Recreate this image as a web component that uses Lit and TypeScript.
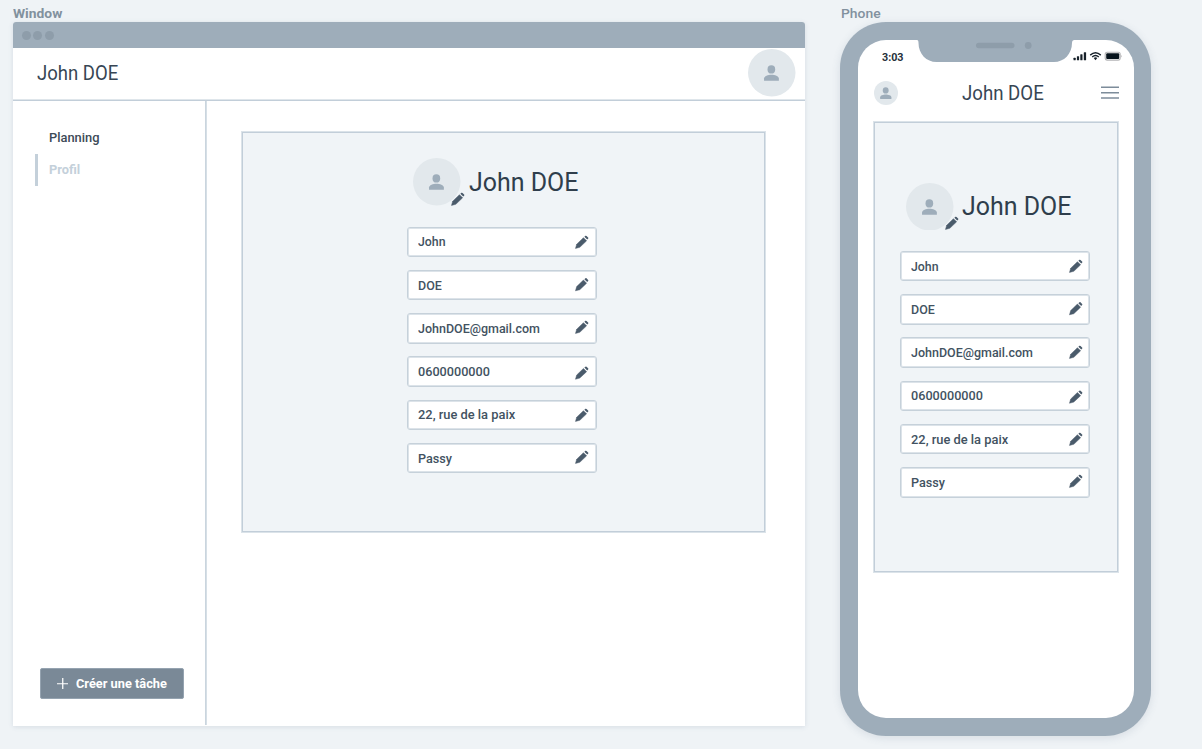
import { LitElement, html, css, svg } from "lit";
import { customElement, property, query } from "lit/decorators.js";
import { styleMap } from "lit/directives/style-map.js";

/** A single line of text condensed or widened to an exact measure. */
@customElement("fit-text")
class FitText extends LitElement {
  @property() text = "";
  @property({ type: Number }) width = 0;
  @query("span") span!: HTMLSpanElement;

  static styles = css`
    :host { display: block; flex: none; white-space: nowrap; }
    span { display: inline-block; transform-origin: 0 50%; }
    .box { display: block; }
  `;

  updated() {
    const natural = this.span.offsetWidth;
    if (natural) this.span.style.transform = `scaleX(${this.width / natural})`;
  }

  render() {
    return html`<div class="box" style=${styleMap({ width: `${this.width}px` })}><span>${this.text}</span></div>`;
  }
}

@customElement("user-avatar")
class UserAvatar extends LitElement {
  static styles = css`
    :host { display: block; flex: none; width: 47.5px; height: 47.5px; }
    :host([small]) { width: 24px; height: 24px; }
    svg { display: block; width: 100%; height: 100%; }
    .disc { fill: #e2e8ec; }
    .person { fill: #9eadba; }
    :host([small]) .person { transform: translate(24px, 24px) scale(1.5) translate(-24px, -24px); }
  `;
  render() {
    return html`<svg viewBox="0 0 48 48">
      <circle class="disc" cx="24" cy="24" r="24" />
      <g class="person">
        <ellipse cx="23.6" cy="20.6" rx="3.9" ry="4.2" />
        <path d="M16.2 32v-2.2c0-2.7 4.2-3.9 7.5-3.9s7.5 1.2 7.5 3.9V32z" />
      </g>
    </svg>`;
  }
}

const pencil = svg`
  <path d="M0.5 14.1 1.8 9.6 9 2.6 12.4 6 5.1 12.9z" stroke="#4a5b6b" stroke-width="0.5" stroke-linejoin="round" />
  <path d="M10 1.7 11.1 0.7Q11.7 0.2 12.3 0.8L14 2.5Q14.5 3.1 14 3.7L13 4.7z" />
`;

interface Field { value: string; width: number; lift: number; }

const fields: Field[] = [
  { value: "John", width: 27.5, lift: 0 },
  { value: "DOE", width: 24, lift: -0.6 },
  { value: "JohnDOE@gmail.com", width: 122, lift: -1 },
  { value: "0600000000", width: 72, lift: 0.8 },
  { value: "22, rue de la paix", width: 97, lift: 0 },
  { value: "Passy", width: 34, lift: -1 },
];

@customElement("profile-card")
class ProfileCard extends LitElement {
  static styles = css`
    :host {
      display: block; box-sizing: border-box;
      border: 1px solid #dbe3e9; box-shadow: inset 0 0 0 1px #c2ced9; background: #f0f4f7;
      color: #2f3e4c; font-family: Roboto, "Liberation Sans", sans-serif;
    }
    .identity { display: flex; align-items: center; padding-left: 6px; height: 48px; }
    .portrait { position: relative; }
    .portrait .edit { position: absolute; left: 38.4px; top: 33.8px; }
    .name { margin-left: 8px; font-size: 25.5px; line-height: 32px; }
    .edit { display: block; width: 13.6px; height: 14px; fill: #4a5b6b; overflow: visible; }
    .fields { display: grid; row-gap: 12.75px; margin-top: 20.5px; }
    .field {
      box-sizing: border-box; height: 30.5px; width: 190.3px;
      display: flex; align-items: center; justify-content: space-between;
      padding: 0 7.4px 0 9.5px; border: 1px solid #c6d1da; box-shadow: inset 0 0 0 1px #dce3e9;
      border-radius: 3px; background: #fff;
      font-size: 13px; line-height: 16px; font-weight: 500; color: #425261;
    }
    .value { margin-top: 1px; }
  `;
  render() {
    return html`
      <div class="identity">
        <div class="portrait">
          <user-avatar></user-avatar>
          <svg class="edit" viewBox="0 0 14.5 14.5">${pencil}</svg>
        </div>
        <fit-text class="name" text="John DOE" .width=${109.5}></fit-text>
      </div>
      <div class="fields">
        ${fields.map((f) => html`
          <div class="field">
            <fit-text class="value" .text=${f.value} .width=${f.width}></fit-text>
            <svg class="edit" viewBox="0 0 14.5 14.5" style=${styleMap({ transform: `translateY(${f.lift}px)` })}>${pencil}</svg>
          </div>`)}
      </div>`;
  }
}

@customElement("desktop-window")
class DesktopWindow extends LitElement {
  static styles = css`
    :host {
      display: flex; flex-direction: column; width: 792.5px; height: 704px;
      background: #fff; border-radius: 3px 3px 0 0; overflow: hidden;
      box-shadow: 0 1px 5px rgba(70, 95, 120, 0.14);
    }
    .titlebar { flex: none; height: 26.4px; display: flex; align-items: center; gap: 2.8px; padding-left: 9px; box-sizing: border-box; background: #9eadba; }
    .dot { width: 9px; height: 9px; border-radius: 50%; background: #8e9daa; }
    .header { flex: none; box-sizing: border-box; height: 52.6px; display: flex; align-items: center; justify-content: space-between; padding: 0 9.5px 2.4px 24px; border-bottom: 1px solid #c2ced9; box-shadow: inset 0 -1px #dfe6eb; }
    .title { font-size: 20px; line-height: 24px; color: #374654; margin-top: 1px; }
    .body { flex: 1; display: flex; }
    .side { flex: none; box-sizing: border-box; width: 194px; border-right: 1px solid #d6dfe6; box-shadow: inset -1px 0 #cad5de; margin-bottom: 1px; display: flex; flex-direction: column; justify-content: space-between; padding: 21px 0 26px 22px; }
    .item { display: flex; align-items: center; box-sizing: border-box; height: 32px; padding-left: 11px; border-left: 3px solid transparent; font-size: 13px; font-weight: 500; line-height: 16px; color: #3c4a57; }
    .item.current { border-color: #c4d0da; color: #c4d0da; font-weight: 700; }
    .create { box-sizing: border-box; width: 144px; height: 31px; margin-left: 5px; padding: 0 0 0 16px; display: flex; align-items: center; gap: 8px; border: 1px solid #95a3b0; border-radius: 2px; background: #7a8997; color: #fff; font: 700 13px/16px Roboto, "Liberation Sans", sans-serif; }
    .create fit-text { margin-top: 1px; }
    .plus { width: 11.5px; height: 11.5px; stroke: #fff; stroke-width: 1.3; }
    .main { flex: 1; padding: 30.4px 0 0 34.5px; }
    .card { width: 524.5px; height: 402px; padding: 25.8px 0 0 165px; }
  `;
  render() {
    return html`
      <div class="titlebar"><i class="dot"></i><i class="dot"></i><i class="dot"></i></div>
      <div class="header">
        <fit-text class="title" text="John DOE" .width=${81.5}></fit-text>
        <user-avatar></user-avatar>
      </div>
      <div class="body">
        <nav class="side">
          <div>
            <div class="item"><fit-text text="Planning" .width=${50.5}></fit-text></div>
            <div class="item current"><fit-text text="Profil" .width=${31.5}></fit-text></div>
          </div>
          <button class="create">
            <svg class="plus" viewBox="0 0 12 12"><path d="M6 0v12M0 6h12" /></svg>
            <fit-text text="Créer une tâche" .width=${90.5}></fit-text>
          </button>
        </nav>
        <div class="main"><profile-card class="card"></profile-card></div>
      </div>`;
  }
}

@customElement("phone-frame")
class PhoneFrame extends LitElement {
  static styles = css`
    :host {
      display: block; position: relative; box-sizing: border-box; width: 311px; height: 713.5px;
      padding: 17.5px; border-radius: 46px; background: #9eadba;
      box-shadow: 0 2px 8px rgba(70, 95, 120, 0.14);
    }
    .screen { box-sizing: border-box; height: 678.5px; border-radius: 28px; background: #fff; }
    .notch { position: absolute; left: 77px; top: 16.5px; width: 160px; height: 24px; }
    .status { height: 33px; display: flex; align-items: center; justify-content: space-between; padding: 0 11px 0 24px; }
    .time { font-size: 11.5px; line-height: 14px; font-weight: 700; color: #26313b; margin-top: 1px; }
    .signals { width: 50px; height: 11px; margin-top: 1px; }
    .header { height: 24px; margin-top: 8.5px; padding: 0 14.5px 0 16px; display: flex; align-items: center; }
    .title { font-size: 20px; line-height: 24px; color: #374654; margin: 0 auto 0 64px; }
    .menu { width: 18px; height: 13px; margin-bottom: 1px; stroke: #7d8c9a; stroke-width: 1.5; }
    .card { width: 246px; height: 452px; margin: 16.3px 0 0 15.5px; padding: 60px 0 0 26.2px; }
  `;
  render() {
    return html`
      <div class="screen">
        <div class="status">
          <fit-text class="time" text="3:03" .width=${21.5}></fit-text>
          <svg class="signals" viewBox="0 0 50 11">
            <g fill="#17212a">
              <rect x="0.5" y="6.8" width="2.2" height="2.4" rx=".5" />
              <rect x="3.9" y="5.3" width="2.2" height="3.9" rx=".5" />
              <rect x="7.3" y="3.3" width="2.2" height="5.9" rx=".5" />
              <rect x="10.8" y="1.3" width="2.3" height="7.9" rx=".5" />
              <path d="M20.7 7q1.8-1.4 3.6 0L22.5 9.2z" />
            </g>
            <g fill="none" stroke="#17212a" stroke-width="1.4">
              <path d="M17.2 4.1q5.3-4.6 10.6 0" />
              <path d="M19.2 6q3.3-2.8 6.6 0" />
            </g>
            <rect x="32.2" y="1.3" width="15" height="7.8" rx="2" fill="none" stroke="#b4b4b6" stroke-width="1.1" />
            <rect x="33.2" y="2.3" width="13" height="5.8" rx="1" fill="#07131c" />
            <path d="M48.2 3.8q1.4 1.4 0 2.8z" fill="#aaa9ab" />
          </svg>
        </div>
        <div class="header">
          <user-avatar small></user-avatar>
          <fit-text class="title" text="John DOE" .width=${82}></fit-text>
          <svg class="menu" viewBox="0 0 18 13"><path d="M0 1.3h18M0 6.8h18M0 12h18" /></svg>
        </div>
        <profile-card class="card"></profile-card>
      </div>
      <svg class="notch" viewBox="0 0 160 24">
        <path fill="#9eadba" d="M0 0V1Q1.5 1 1.5 4C1.5 15 9.5 23 19.5 23H137C147 23 155 15 155 4Q155 1 157.5 1V0z" />
        <g fill="#8e9daa">
          <rect x="59" y="3.8" width="38.5" height="5.4" rx="2.7" />
          <circle cx="111.2" cy="6.5" r="3.4" />
        </g>
      </svg>`;
  }
}

@customElement("app-root")
class AppRoot extends LitElement {
  static styles = css`
    :host {
      display: flex; gap: 35px; box-sizing: border-box; width: 1202px; height: 749px; overflow: hidden;
      padding: 6px 0 0 12.5px; background: #eff3f6;
      font-family: Roboto, "Liberation Sans", sans-serif;
    }
    .label { height: 16px; font-size: 13px; line-height: 16px; font-weight: 500; color: #82919e; }
    .label.strong { font-weight: 700; }
    .label.phone { margin-left: 0.5px; }
  `;
  render() {
    return html`
      <section>
        <fit-text class="label strong" text="Window" .width=${49}></fit-text>
        <desktop-window></desktop-window>
      </section>
      <section>
        <fit-text class="label phone" text="Phone" .width=${39.5}></fit-text>
        <phone-frame></phone-frame>
      </section>`;
  }
}
